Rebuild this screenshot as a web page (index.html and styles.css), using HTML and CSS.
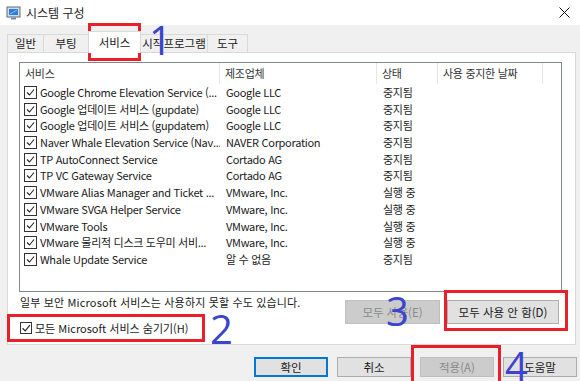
FILE: index.html
```html
<!DOCTYPE html>
<html lang="ko">

<head>
    <meta charset="UTF-8">
    <title>시스템 구성</title>
    <link rel="stylesheet" href="styles.css">
</head>

<body>

    <div class="titlebar">
        <svg class="app-icon" width="16" height="16" viewBox="0 0 16 16">
            <rect x="1" y="2" width="13" height="10" fill="#d5dde6" stroke="#5d6b7a" />
            <rect x="3" y="4" width="9" height="6" fill="#2a7fe0" />
            <path d="M4 9 L11 5" stroke="#8fc2f5" stroke-width="1" />
            <rect x="5" y="12.5" width="5" height="2" fill="#7d8a97" />
        </svg>
        <span class="title">시스템 구성</span>
        <svg class="close" width="11" height="11" viewBox="0 0 11 11">
            <path d="M0.5 0.5 L10.5 10.5 M10.5 0.5 L0.5 10.5" stroke="#111" stroke-width="1" />
        </svg>
    </div>

    <!-- tab strip -->
    <div class="tabs">
        <div class="tab t-general">일반</div>
        <div class="tab t-boot">부팅</div>
        <div class="tab t-services active">서비스</div>
        <div class="tab t-startup">시작프로그램</div>
        <div class="tab t-tools">도구</div>
    </div>

    <div class="panel">
        <div class="list">
            <div class="row head">
                <div class="cell">서비스</div>
                <div class="cell">제조업체</div>
                <div class="cell">상태</div>
                <div class="cell">사용 중지한 날짜</div>
                <div class="cell last"></div>
            </div>
            <div class="row"><div class="cell name"><span class="cb"></span>Google Chrome Elevation Service (...</div><div class="cell">Google LLC</div><div class="cell">중지됨</div></div>
            <div class="row"><div class="cell name"><span class="cb"></span>Google 업데이트 서비스 (gupdate)</div><div class="cell">Google LLC</div><div class="cell">중지됨</div></div>
            <div class="row"><div class="cell name"><span class="cb"></span>Google 업데이트 서비스 (gupdatem)</div><div class="cell">Google LLC</div><div class="cell">중지됨</div></div>
            <div class="row"><div class="cell name"><span class="cb"></span>Naver Whale Elevation Service (Nav...</div><div class="cell">NAVER Corporation</div><div class="cell">중지됨</div></div>
            <div class="row"><div class="cell name"><span class="cb"></span>TP AutoConnect Service</div><div class="cell">Cortado AG</div><div class="cell">중지됨</div></div>
            <div class="row"><div class="cell name"><span class="cb"></span>TP VC Gateway Service</div><div class="cell">Cortado AG</div><div class="cell">중지됨</div></div>
            <div class="row"><div class="cell name"><span class="cb"></span>VMware Alias Manager and Ticket ...</div><div class="cell">VMware, Inc.</div><div class="cell">실행 중</div></div>
            <div class="row"><div class="cell name"><span class="cb"></span>VMware SVGA Helper Service</div><div class="cell">VMware, Inc.</div><div class="cell">실행 중</div></div>
            <div class="row"><div class="cell name"><span class="cb"></span>VMware Tools</div><div class="cell">VMware, Inc.</div><div class="cell">실행 중</div></div>
            <div class="row"><div class="cell name"><span class="cb"></span>VMware 물리적 디스크 도우미 서비...</div><div class="cell">VMware, Inc.</div><div class="cell">실행 중</div></div>
            <div class="row"><div class="cell name"><span class="cb"></span>Whale Update Service</div><div class="cell">알 수 없음</div><div class="cell">중지됨</div></div>
        </div>

        <div class="panel-foot">
            <div class="foot-left">
                <p class="note">일부 보안 Microsoft 서비스는 사용하지 못할 수도 있습니다.</p>
                <label class="hide-ms"><span class="cb"></span>모든 Microsoft 서비스 숨기기(H)</label>
            </div>
            <div class="foot-buttons">
                <button class="btn wide" disabled>모두 사용(E)</button>
                <button class="btn wider">모두 사용 안 함(D)</button>
            </div>
        </div>
    </div>

    <div class="actions">
        <button class="btn act default">확인</button>
        <button class="btn act">취소</button>
        <button class="btn act" disabled>적용(A)</button>
        <button class="btn act">도움말</button>
    </div>

    <!-- annotations drawn over the dialog -->
    <div class="mark m1"></div>
    <div class="mark m2"></div>
    <div class="mark m3"></div>
    <div class="mark m4"></div>
    <span class="num n1">1</span>
    <span class="num n2">2</span>
    <span class="num n3">3</span>
    <span class="num n4">4</span>

</body>

</html>
```

FILE: styles.css
```css
body {
    margin: 0;
    background-color: #f0f0f0;
    font-family: "Noto Sans CJK KR", sans-serif;
    font-size: 11px;
    color: #1a1a1a;
    overflow: hidden;
}

.titlebar {
    height: 25px;
    background-color: #ffffff;
    display: flex;
    align-items: center;
    padding: 0 10px 0 6px;
}

.app-icon {
    margin-right: 4px;
}

.title {
    flex: 1;
    font-size: 12px;
    color: #222;
}

/* tabs */
.tabs {
    display: flex;
    align-items: flex-end;
    height: 27px;
    padding-left: 7px;
    font-size: 11.5px;
}

.tab {
    box-sizing: border-box;
    height: 18px;
    line-height: 16px;
    border: 1px solid #d9d9d9;
    border-bottom: none;
    margin-right: -1px;
    text-align: center;
    color: #1a1a1a;
}

.t-general { width: 37px; }
.t-boot { width: 46px; }
.t-services { width: 53px; }
.t-startup { width: 68px; }
.t-tools { width: 41px; }

.tab.active {
    height: 22px;
    line-height: 20px;
    background-color: #ffffff;
    margin-bottom: -1px;
    position: relative;
    z-index: 1;
}

.panel {
    box-sizing: border-box;
    height: 293px;
    margin: 0 4px 0 7px;
    padding: 9px 13px 0 11px;
    background-color: #ffffff;
    border: 1px solid #d9d9d9;
}

/* service list */
.list {
    box-sizing: border-box;
    height: 230px;
    border: 1px solid #828790;
    background-color: #ffffff;
    letter-spacing: -0.3px;
}

.row {
    display: grid;
    grid-template-columns: 200px 157px 61px 105px 1fr;
    height: 16.7px;
    line-height: 16.7px;
    white-space: nowrap;
}

.row.head {
    height: 21px;
    line-height: 20px;
    color: #333;
}

.row.head .cell {
    border-right: 1px solid #e5e5e5;
    padding-left: 5px;
}

.row.head .cell.last {
    border-right: none;
}

.cell {
    padding-left: 6px;
    overflow: hidden;
}

.cell.name {
    padding-left: 4px;
    display: flex;
    align-items: center;
}

.cb {
    box-sizing: border-box;
    display: inline-block;
    width: 13px;
    height: 13px;
    border: 1px solid #333;
    background: #fff url("data:image/svg+xml,%3Csvg xmlns='http://www.w3.org/2000/svg' width='11' height='11'%3E%3Cpath d='M2 5.5 L4.5 8 L9 2.5' fill='none' stroke='%23222' stroke-width='1.1'/%3E%3C/svg%3E") no-repeat center;
    margin-right: 3px;
    flex-shrink: 0;
}

.panel-foot {
    display: flex;
    margin-top: 2px;
}

.foot-left {
    flex: 1;
    display: flex;
    flex-direction: column;
    gap: 10px;
}

.note {
    margin: 0;
    padding-left: 1px;
    line-height: 16px;
    letter-spacing: 0.15px;
}

.hide-ms {
    display: flex;
    align-items: center;
    height: 16px;
    padding-left: 1px;
}

.hide-ms .cb {
    width: 12px;
    height: 12px;
}

.foot-buttons {
    display: flex;
    gap: 7px;
    margin-top: 6px;
    margin-right: 3px;
}

.btn {
    box-sizing: border-box;
    height: 24px;
    font-family: inherit;
    font-size: 11.5px;
    color: #1a1a1a;
    background-color: #e1e1e1;
    border: 1px solid #adadad;
    padding: 0;
}

.btn:disabled {
    background-color: #cccccc;
    border-color: #bfbfbf;
    color: #8a8a8a;
}

.btn.wide { width: 95px; }
.btn.wider { width: 112px; }

.actions {
    display: flex;
    justify-content: flex-end;
    gap: 9px;
    padding: 12px 3px 0 0;
}

.btn.act {
    width: 74px;
    height: 20px;
}

.btn.default {
    border-color: #0078d7;
    box-shadow: inset 0 0 0 1px #0078d7;
}

/* red boxes and blue step numbers */
.mark {
    position: absolute;
    box-sizing: border-box;
    border: 3px solid #e8202a;
}

.m1 { left: 88px; top: 23px; width: 53px; height: 38px; }
.m2 { left: 7px; top: 314px; width: 198px; height: 28px; }
.m3 { left: 444px; top: 290px; width: 124px; height: 41px; }
.m4 { left: 411px; top: 345px; width: 90px; height: 40px; }

.num {
    position: absolute;
    font-family: "Open Sans", sans-serif;
    font-weight: 400;
    font-size: 40px;
    line-height: 30px;
    color: #3a44cc;
}

.n1 { left: 149px; top: 25px; }
.n2 { left: 210px; top: 314px; }
.n3 { left: 386px; top: 296px; }
.n4 { left: 505px; top: 351px; }
```
